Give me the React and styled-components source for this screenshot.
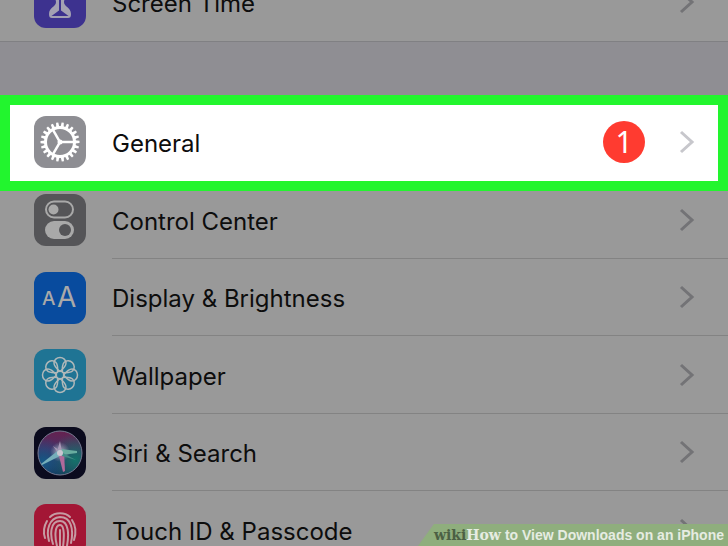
import React from "react";
import styled, { createGlobalStyle, css } from "styled-components";

const GlobalStyle = createGlobalStyle`
  *, *::before, *::after { box-sizing: border-box; }
  body { margin: 0; background: #999999; }
`;

const Page = styled.main`
  position: relative;
  height: 100vh;
  overflow: hidden;
  background: #999999;
  color: #0d0d0d;
  font-family: Inter, "Liberation Sans", sans-serif;
`;

const TopGroup = styled.section`
  display: flex;
  flex-direction: column;
  justify-content: flex-end;
  height: 42px;
  overflow: hidden;
  border-bottom: 1px solid #808083;
`;

const GroupGap = styled.div`
  height: 63px;
  background: #8f8e93;
`;

const List = styled.ul`
  margin: 0;
  padding: 0;
  list-style: none;
`;

const Item = styled.li`
  height: 78px;
  &:nth-child(odd) { height: 77px; }
  &:first-child { height: 76px; }
`;

const Row = styled.button`
  display: flex;
  align-items: center;
  width: 100%;
  height: 100%;
  padding: 0 0 0 34px;
  border: 0;
  background: transparent;
  color: inherit;
  font: inherit;
  text-align: left;
  cursor: pointer;
  ${(p) => p.$tall && css`
    flex: none;
    height: 78px;
  `}
  ${(p) => p.$highlighted && css`
    position: relative;
    z-index: 1;
    width: calc(100% - 20px);
    margin: 0 10px;
    padding: 0 0 2px 24px;
    background: #ffffff;
    outline: 10px solid #22f52e;
  `}
`;

const Icon = styled.svg`
  flex: none;
  width: 52px;
  height: 52px;
  margin-right: 26px;
  border-radius: 12px;
  background: ${(p) => p.$fill};
`;

const Body = styled.span`
  display: flex;
  flex: 1;
  align-items: center;
  height: 100%;
  padding-right: ${(p) => (p.$inset ? 23 : 33)}px;
  border-bottom: ${(p) => (p.$line ? "1px solid #838383" : "0")};
`;

const Label = styled.span`
  flex: 1;
  font-size: 24px;
  line-height: 32px;
  padding-top: 4px;
`;

const Badge = styled.span`
  width: 42px;
  height: 42px;
  margin-right: 34px;
  border-radius: 50%;
  background: #ff3b30;
  color: #ffffff;
  font-family: "Noto Sans", sans-serif;
  font-size: 30px;
  line-height: 42px;
  text-align: center;
`;

const ChevronIcon = styled.svg`
  flex: none;
  width: 16px;
  height: 24px;
  fill: none;
  stroke: ${(p) => (p.$light ? "#c7c7cc" : "#737376")};
  stroke-width: 3;
`;

const Banner = styled.footer`
  position: absolute;
  right: 0;
  bottom: 0;
  display: flex;
  align-items: center;
  height: 22px;
  padding: 0 4px 0 16px;
  background: #8fae7d;
  clip-path: polygon(16px 0, 100% 0, 100% 100%, 0 100%);
  color: #e6ece2;
  font: bold 14px/22px "Liberation Sans", Arial, sans-serif;
  white-space: pre;
`;

const Brand = styled.span`
  margin-right: 4px;
  font-family: "DejaVu Serif", serif;
`;

const BrandDark = styled.span`
  color: #4c6044;
`;

const fg = "#a9a9a9";
const spin = (count) => Array.from({ length: count }, (_, i) => (i * 360) / count);

const ScreenTime = () => (
  <Icon viewBox="0 0 52 52" $fill="#3d328f" aria-hidden="true">
    <path d="M17 10h18c2 0 2 2 2 4 0 5-7 7-7 12s7 5 7 12c0 3-1 4-3 4H18c-2 0-3-1-3-4 0-7 7-7 7-12s-7-7-7-12c0-2 0-4 2-4z" fill="#a3a1b3" />
    <path d="M26 20v16M20.500 39l5.500-4 5.500 4z" fill="#3d328f" stroke="#3d328f" strokeWidth="2" />
  </Icon>
);

const Gear = () => (
  <Icon viewBox="0 0 52 52" $fill="#8e8e93" aria-hidden="true">
    <g transform="translate(26 26)" stroke="#fff" fill="none">
      {spin(22).map((a) => (
        <path key={a} d="M-1.600-15L-1.100-19.500H1.100L1.600-15z" fill="#fff" stroke="none" transform={`rotate(${a + 8})`} />
      ))}
      <circle r="14.500" strokeWidth="3" />
      {[0, 120, 240].map((a) => (
        <path key={a} d="M0 0H14" strokeWidth="2.500" transform={`rotate(${a})`} />
      ))}
      <circle r="2.500" fill="#fff" stroke="none" />
    </g>
  </Icon>
);

const Switches = () => (
  <Icon viewBox="0 0 52 52" $fill="#555558" aria-hidden="true">
    <rect x="12" y="7.500" width="27" height="16" rx="8" fill="none" stroke={fg} strokeWidth="2" />
    <circle cx="19.500" cy="15.500" r="5" fill={fg} />
    <rect x="11" y="27" width="29" height="18" rx="9" fill={fg} />
    <circle cx="31" cy="36" r="6" fill="#555558" />
  </Icon>
);

const Letters = () => (
  <Icon viewBox="0 0 52 52" $fill="#084b9e" aria-hidden="true">
    <g fill={fg} fontFamily="Inter, sans-serif">
      <text x="8" y="33" fontSize="19" fontWeight="500">A</text>
      <text x="23" y="35" fontSize="28">A</text>
    </g>
  </Icon>
);

const Flower = () => (
  <Icon viewBox="0 0 52 52" $fill="#1f7494" aria-hidden="true">
    <g transform="translate(26 26)" fill="none" stroke="#b0b8b9" strokeWidth="1.500">
      {spin(8).map((a) => (
        <path key={a} d="M0-3.500C-3-6-6-8.500-6-12A6 5.500 0 0 1 6-12C6-8.500 3-6 0-3.500z" transform={`rotate(${a})`} />
      ))}
      <circle r="4" />
    </g>
  </Icon>
);

const Siri = () => (
  <Icon viewBox="0 0 52 52" $fill="#0b0b1e" aria-hidden="true">
    <defs>
      <linearGradient id="orb" x1="0.500" y1="0" x2="0.400" y2="1">
        <stop offset="0" stopColor="#65224f" />
        <stop offset="0.450" stopColor="#4b2e66" />
        <stop offset="1" stopColor="#123354" />
      </linearGradient>
      <radialGradient id="teal" cx="0.850" cy="0.650" r="0.600">
        <stop offset="0" stopColor="#13746a" />
        <stop offset="1" stopColor="#13746a" stopOpacity="0" />
      </radialGradient>
      <radialGradient id="blue" cx="0.120" cy="0.700" r="0.550">
        <stop offset="0" stopColor="#155886" />
        <stop offset="1" stopColor="#155886" stopOpacity="0" />
      </radialGradient>
      <radialGradient id="glow">
        <stop offset="0" stopColor="#c9c6d0" />
        <stop offset="1" stopColor="#9a8db0" stopOpacity="0" />
      </radialGradient>
    </defs>
    <circle cx="26" cy="26" r="22" fill="url(#orb)" />
    <circle cx="26" cy="26" r="22" fill="url(#teal)" />
    <circle cx="26" cy="26" r="22" fill="url(#blue)" stroke="#767991" />
    <circle cx="26" cy="25" r="10" fill="url(#glow)" />
    <path d="M26 22L7 37l1 1 20-10z" fill="#75aeba" />
    <path d="M24 25l5 20 2-1-1-19z" fill="#b06a9a" />
    <path d="M27 22l16 2v2l-15 2z" fill="#69ad9f" />
    <path d="M27 25l15 8-14-4z" fill="#438c86" />
    <path d="M23 25l3-11 2 11-9-6 6 8z" fill="#a899b7" />
    <circle cx="26" cy="26" r="3" fill="#c9c6d0" />
  </Icon>
);

const TouchId = () => (
  <Icon viewBox="0 0 52 52" $fill="#a31635" aria-hidden="true">
    <g fill="none" stroke="#c69ba3" strokeWidth="2" strokeLinecap="round">
      <path d="M16 13C21 8 31 8 36 13" />
      <path d="M11 34c-2-6-1-12 2-17M38 16c4 6 4 14 2 20" />
      <path d="M15 37c-3-11 0-23 11-24 11 0 14 12 11 26" />
      <path d="M19 40c-3-9-3-23 7-23 9 0 9 14 7 25" />
      <path d="M23 42c-2-7-3-21 3-21 5 0 4 14 3 22" />
      <path d="M26 26v18" />
    </g>
  </Icon>
);

const Chevron = ({ light }) => (
  <ChevronIcon viewBox="0 0 16 24" $light={light} aria-hidden="true">
    <path d="M2 2l11 10L2 22" />
  </ChevronIcon>
);

function SettingsRow({ icon: RowIcon, label, badge, highlighted, line, tall }) {
  return (
    <Row type="button" $highlighted={highlighted} $tall={tall}>
      <RowIcon />
      <Body $inset={highlighted} $line={line}>
        <Label>{label}</Label>
        {badge && <Badge>{badge}</Badge>}
        <Chevron light={highlighted} />
      </Body>
    </Row>
  );
}

const settings = [
  { label: "General", icon: Gear, badge: 1, highlighted: true },
  { label: "Control Center", icon: Switches, line: true },
  { label: "Display & Brightness", icon: Letters, line: true },
  { label: "Wallpaper", icon: Flower, line: true },
  { label: "Siri & Search", icon: Siri, line: true },
  { label: "Touch ID & Passcode", icon: TouchId },
];

export default function App() {
  return (
    <Page>
      <GlobalStyle />
      <TopGroup>
        <SettingsRow icon={ScreenTime} label="Screen Time" tall />
      </TopGroup>
      <GroupGap />
      <List>
        {settings.map((s) => (
          <Item key={s.label}>
            <SettingsRow {...s} />
          </Item>
        ))}
      </List>
      <Banner>
        <Brand>
          <BrandDark>wiki</BrandDark>How
        </Brand>
        to View Downloads on an iPhone
      </Banner>
    </Page>
  );
}
